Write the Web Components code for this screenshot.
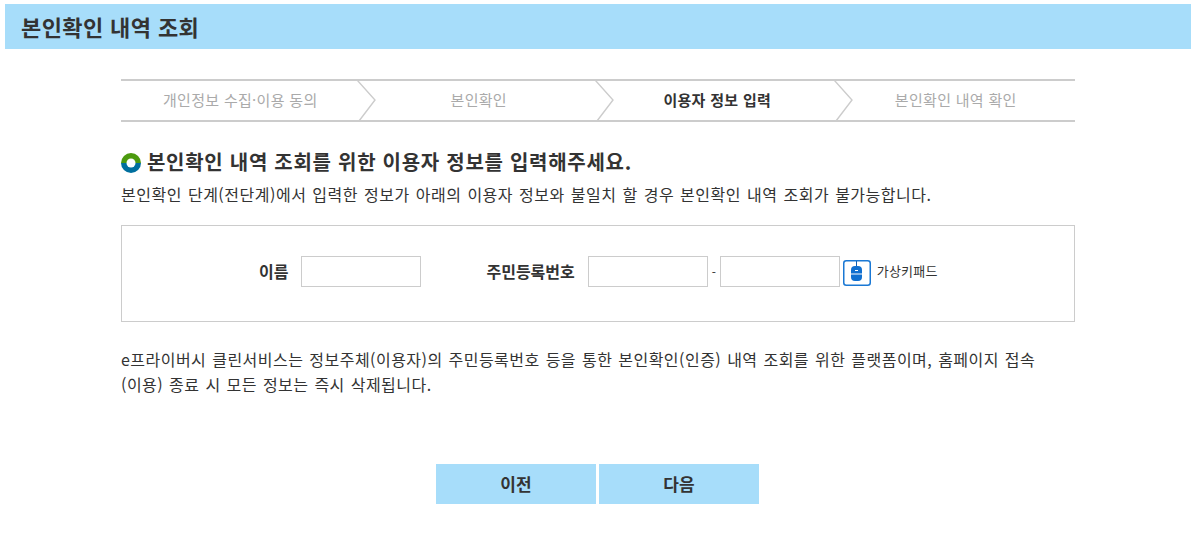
<!DOCTYPE html>
<html lang="ko">
<head>
<meta charset="utf-8">
<title>본인확인 내역 조회</title>
<style>
    html, body {
        margin: 0;
        background: #fff;
    }
    body {
        padding: 4px 5px 0;
        font-family: "Noto Sans CJK KR", "Noto Sans", sans-serif;
        color: #333;
    }
    .desc, .note {
        font-size: 16px;
        word-spacing: 1px;
        color: #333;
    }
    .desc {
        margin: 9px 0 0;
        height: 20px;
        line-height: 20px;
        letter-spacing: 0.51px;
    }
    .note {
        margin: 25px 0 0;
        width: 930px;
        line-height: 25px;
        letter-spacing: 0.47px;
    }
</style>
</head>
<body>
<page-title>본인확인 내역 조회</page-title>
<main-content>
    <step-bar>
        <step-item>개인정보 수집·이용 동의</step-item>
        <step-item>본인확인</step-item>
        <step-item active>이용자 정보 입력</step-item>
        <step-item last>본인확인 내역 확인</step-item>
    </step-bar>
    <section-head>본인확인 내역 조회를 위한 이용자 정보를 입력해주세요.</section-head>
    <p class="desc">본인확인 단계(전단계)에서 입력한 정보가 아래의 이용자 정보와 불일치 할 경우 본인확인 내역 조회가 불가능합니다.</p>
    <id-form></id-form>
    <p class="note">e프라이버시 클린서비스는 정보주체(이용자)의 주민등록번호 등을 통한 본인확인(인증) 내역 조회를 위한 플랫폼이며, 홈페이지 접속 (이용) 종료 시 모든 정보는 즉시 삭제됩니다.</p>
    <nav-buttons>
        <nav-button>이전</nav-button>
        <nav-button>다음</nav-button>
    </nav-buttons>
</main-content>

<script>
function define(name, html) {
    customElements.define(name, class extends HTMLElement {
        constructor() {
            super();
            this.attachShadow({ mode: 'open' });
            this.shadowRoot.innerHTML = html;
        }
    });
}

define('page-title', `
    <style>
        :host {
            display: flex;
            align-items: center;
            box-sizing: border-box;
            width: 1186px;
            height: 45px;
            padding: 0 0 1px 16px;
            background: #a7ddfa;
            font-size: 22px;
            font-weight: 700;
            letter-spacing: 0.4px;
            color: #333;
        }
    </style>
    <slot></slot>
`);

define('main-content', `
    <style>
        :host {
            display: block;
            width: 954px;
            margin: 30px 0 0 116px;
        }
    </style>
    <slot></slot>
`);

define('step-bar', `
    <style>
        :host {
            display: flex;
            box-sizing: border-box;
            height: 43px;
            border-top: 2px solid #ccc;
            border-bottom: 2px solid #ccc;
        }
    </style>
    <slot></slot>
`);

define('step-item', `
    <style>
        :host {
            flex: 1;
            position: relative;
            display: flex;
            align-items: center;
            justify-content: center;
            padding-bottom: 2px;
            font-size: 15px;
            font-weight: 400;
            letter-spacing: 0.3px;
            color: #aaa;
        }
        :host([active]) {
            color: #333;
            font-weight: 700;
        }
        svg {
            position: absolute;
            right: -17px;
            top: -2px;
        }
        :host([last]) svg {
            display: none;
        }
    </style>
    <slot></slot>
    <svg width="20" height="43" viewBox="0 0 20 43"><path d="M0 1 L18 21 L2 42" fill="none" stroke="#ccc" stroke-width="1.4"/></svg>
`);

define('section-head', `
    <style>
        :host {
            display: flex;
            align-items: center;
            gap: 6px;
            height: 28px;
            margin-top: 25px;
            font-size: 20px;
            font-weight: 700;
            letter-spacing: 0.72px;
            color: #333;
        }
        svg {
            flex: none;
            margin-top: 4px;
        }
    </style>
    <svg width="20" height="20" viewBox="0 0 20 20">
        <path d="M0 10a10 10 0 0 1 20 0z" fill="#4c9a0e"/>
        <path d="M0 10a10 10 0 0 0 20 0z" fill="#006f9e"/>
        <circle cx="10" cy="10" r="4.5" fill="#fff"/>
    </svg>
    <slot></slot>
`);

define('id-form', `
    <style>
        :host {
            display: flex;
            align-items: center;
            box-sizing: border-box;
            height: 97px;
            margin-top: 21px;
            padding: 0 0 4px 137px;
            border: 1px solid #ccc;
            font-size: 16px;
            color: #333;
        }
        label {
            padding-bottom: 2px;
            font-weight: 700;
        }
        input {
            box-sizing: border-box;
            width: 120px;
            height: 31px;
            padding: 0;
            border: 1px solid #ccc;
            background: #fff;
        }
        .name { margin: 0 65px 0 13px; }
        .rrn { margin-left: 13px; }
        .dash {
            width: 12px;
            text-align: center;
            font-size: 12px;
        }
        .key {
            display: flex;
            margin: 2px 0 0 3px;
        }
        .keytext {
            margin-left: 6px;
            padding-bottom: 2px;
            font-size: 13px;
            letter-spacing: 0.2px;
        }
    </style>
    <label>이름</label>
    <input class="name" type="text">
    <label>주민등록번호</label>
    <input class="rrn" type="text">
    <span class="dash">-</span>
    <input type="text">
    <span class="key">
        <svg width="28" height="26" viewBox="0 0 28 26">
            <rect x="0.75" y="0.75" width="26.5" height="24.5" rx="2.5" fill="#fff" stroke="#1a78d4" stroke-width="1.5"/>
            <path d="M13.5 1v6" stroke="#0c5fb5" stroke-width="1"/>
            <rect x="8" y="6" width="11" height="15" rx="4" fill="#0f6fd0"/>
            <path d="M12 10.5h3M8 14h11" stroke="#fff" stroke-width="1"/>
        </svg>
    </span>
    <span class="keytext">가상키패드</span>
`);

define('nav-buttons', `
    <style>
        :host {
            display: flex;
            justify-content: center;
            gap: 3px;
            margin-top: 67px;
            padding-right: 1px;
        }
    </style>
    <slot></slot>
`);

define('nav-button', `
    <style>
        :host {
            display: flex;
            align-items: center;
            justify-content: center;
            box-sizing: border-box;
            width: 160px;
            height: 40px;
            padding-bottom: 2px;
            background: #a7ddfa;
            font-size: 17px;
            font-weight: 700;
            color: #333;
        }
    </style>
    <slot></slot>
`);
</script>
</body>
</html>
